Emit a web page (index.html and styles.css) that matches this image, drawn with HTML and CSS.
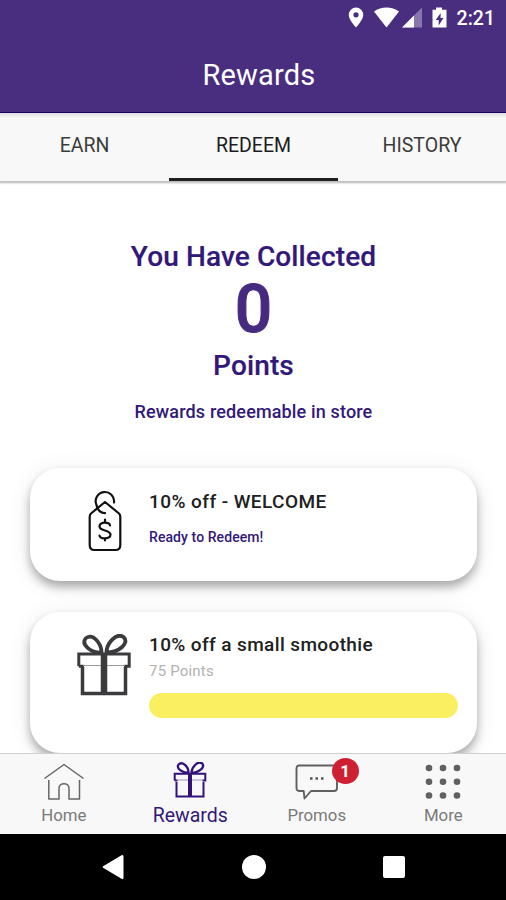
FILE: index.html
```html
<!DOCTYPE html>
<html lang="en">
<head>
<meta charset="utf-8">
<title>Rewards</title>
<link rel="stylesheet" href="styles.css">
</head>
<body>
<div class="app">
  <header class="header">
    <div class="status">
      <svg class="status-icons" width="102" height="22" viewBox="0 0 102 22" fill="#fff">
        <path fill-rule="evenodd" d="M8 0.5a7.3 7.3 0 0 1 7.3 7.3C15.300 13 8 20.500 8 20.500S.7 13 .7 7.800A7.300 7.300 0 0 1 8 .5zM8 5.200a2.600 2.600 0 1 0 0 5.200 2.600 2.600 0 0 0 0-5.200z"/>
        <path d="M26 4.500C33 -.8 44 -.8 51 4.500L38.500 20.500z"/>
        <path d="M74 .5V20.500H54z" opacity=".35"/>
        <path d="M66 8.500V20.500H54z"/>
        <path fill-rule="evenodd" d="M88 .5h6v2.200h4.500V20.500H84.500V2.700H88zM92.700 6l-5 7h3v5.500l4.800-7.500h-3z"/>
      </svg>
      <span class="clock">2:21</span>
    </div>
    <h1 class="title">Rewards</h1>
  </header>
  <nav class="tabs">
    <a class="tab tab-earn">EARN</a>
    <a class="tab tab-active">REDEEM</a>
    <a class="tab tab-history">HISTORY</a>
  </nav>
  <main class="content">
    <section class="summary">
      <p class="collected">You Have Collected</p>
      <p class="count">0</p>
      <p class="unit">Points</p>
      <p class="note">Rewards redeemable in store</p>
    </section>
    <article class="card card-ready">
      <svg class="card-icon tag-icon" width="34" height="62" viewBox="0 0 34 62" fill="none" stroke="#111" stroke-width="2.200" stroke-linecap="round" stroke-linejoin="round">
        <path d="M17 11 L31 22.500 Q32.300 23.700 32.300 26 V54 Q32.300 59 27.500 59 H6.500 Q1.700 59 1.700 54 V26 Q1.700 23.700 3 22.500 Z"/>
        <path d="M26 11.500A9.200 9.200 0 1 0 8.500 14C9.500 19 13 21.800 17 22.200"/>
        <path d="M22 34.500C22 30.500 11.500 30.500 11.500 35.500C11.500 40.500 22.500 38.500 22.500 43.500C22.500 48.500 11.500 48.500 11.500 44.500M17 28.500V31.500M17 47.500V49.500"/>
      </svg>
      <div class="card-body">
        <h2 class="card-title title-welcome">10% off - WELCOME</h2>
        <p class="ready">Ready to Redeem!</p>
      </div>
    </article>
    <article class="card card-smoothie">
      <svg class="card-icon gift-icon" width="54" height="62" viewBox="0 0 54 62" fill="none" stroke="#3b3b3d">
        <path stroke-width="3.500" d="M5.500 33V59.500H48.500V33"/>
        <path stroke-width="3" d="M1.800 32.200V20H52.200V32.200H47M1.800 32.200H7"/>
        <path stroke-width="1" stroke="#999" d="M6 31.500H48"/>
        <path stroke-width="6.500" d="M27 19V60"/>
        <path stroke-width="3.800" d="M24.500 18.500C14 19 4 11 8.500 4.500C15-2 24.500 9 24.500 18.500zM29.500 18.500C29.500 10 39-2 46.500 3C53 9 42 18.500 29.500 18.500z"/>
      </svg>
      <div class="card-body">
        <h2 class="card-title title-smoothie">10% off a small smoothie</h2>
        <p class="cost">75 Points</p>
        <div class="progress"></div>
      </div>
    </article>
  </main>
  <nav class="bottom-nav">
    <a class="nav-item">
      <svg class="nav-icon" width="42" height="40" viewBox="0 0 42 40" fill="none" stroke="#666" stroke-width="1.500" stroke-linejoin="round">
        <path d="M1.500 16.500L21 2.500L40.500 16.500M5.800 18V37H16V26.500C16 20 26 20 26 26.500V37H36.500V18"/>
      </svg>
      <span class="nav-label label-home">Home</span>
    </a>
    <a class="nav-item nav-active">
      <svg class="nav-icon" width="34" height="40" viewBox="0 0 34 40" fill="none" stroke="#32127a">
        <path stroke-width="2" d="M3.500 20V34.500H30.500V20"/>
        <path stroke-width="2" d="M1.700 18.500V11.700H32.300V18.500H29.500M1.700 18.500H4.500"/>
        <path stroke-width=".8" stroke="#8d80ab" d="M4 18H30"/>
        <path stroke-width="4" d="M17 11V35"/>
        <path stroke-width="2.300" d="M15.500 10.800C9 11 3 6.500 5.500 2.500C9.500-1 15.500 4.500 15.500 10.800zM18.500 10.800C18.500 5.500 24.500-1.500 29 1.300C33 5 26 10.800 18.500 10.800z"/>
      </svg>
      <span class="nav-label label-rewards">Rewards</span>
    </a>
    <a class="nav-item">
      <span class="promo-icon">
        <svg class="nav-icon" width="44" height="40" viewBox="0 0 44 40" fill="none" stroke="#606060" stroke-width="1.900" stroke-linejoin="round">
          <path d="M4 3.500H39Q42 3.500 42 6.500V26Q42 29 39 29H16L9.500 36.500L8.700 29H4Q1.500 29 1.500 26V6.500Q1.500 3.500 4 3.500z"/>
          <path stroke="none" fill="#555" d="M15 15.200h2.500v2.500h-2.500zM20.500 15.200h2.500v2.500h-2.500zM26 15.200h2.500v2.500h-2.500z"/>
        </svg>
        <span class="badge">1</span>
      </span>
      <span class="nav-label label-promos">Promos</span>
    </a>
    <a class="nav-item">
      <svg class="nav-icon" width="36" height="40" viewBox="0 0 36 40" fill="#606060">
        <circle cx="4" cy="6" r="3.300"/><circle cx="18" cy="6" r="3.300"/><circle cx="32" cy="6" r="3.300"/>
        <circle cx="4" cy="19.700" r="3.300"/><circle cx="18" cy="19.700" r="3.300"/><circle cx="32" cy="19.700" r="3.300"/>
        <circle cx="4" cy="33.500" r="3.300"/><circle cx="18" cy="33.500" r="3.300"/><circle cx="32" cy="33.500" r="3.300"/>
      </svg>
      <span class="nav-label label-more">More</span>
    </a>
  </nav>
  <footer class="system-bar">
    <svg width="22" height="26" viewBox="0 0 22 26" fill="#fff"><path d="M19.500 1.300Q21.500.3 21.500 2.500V23.500Q21.500 25.700 19.500 24.700L1.500 14Q-.3 13 1.500 12z"/></svg>
    <span class="sys-home"></span>
    <span class="sys-recent"></span>
  </footer>
</div>
</body>
</html>
```
FILE: styles.css
```css
* { box-sizing: border-box; margin: 0; padding: 0; }
body { width: 506px; height: 900px; overflow: hidden; background: #fff; font-family: Roboto, "Liberation Sans", sans-serif; }
.app { height: 900px; display: flex; flex-direction: column; }
.header { height: 113px; flex: none; background: #492e7f; border-bottom: 1px solid #200068; color: #fff; }
.status { height: 36px; display: flex; justify-content: flex-end; align-items: center; padding-right: 11px; gap: 7px; }
.status-icons { margin-top: -1px; }
.clock { font-size: 19.500px; font-weight: 500; line-height: 37px; }
.title { text-align: center; padding-left: 12px; font-size: 29px; font-weight: 400; line-height: 78px; letter-spacing: .2px; }
.tabs { height: 68px; flex: none; display: grid; grid-template-columns: 169px 169px 168px; grid-template-rows: 68px; background: linear-gradient(#dedde3, #f8f8f8 5px); box-shadow: 0 1px 2px 1px rgba(0,0,0,.28); position: relative; }
.tab { text-align: center; line-height: 66px; font-size: 19.500px; color: #3c3c3c; }
.tab-active { color: #1c1c1c; border-bottom: 3px solid #202022; }
.content { flex: 1; min-height: 0; overflow: hidden; padding: 60px 29px 0 30px; background: #fff; }
.summary { height: 227px; text-align: center; color: #32187a; }
.collected { font-size: 28px; font-weight: 500; line-height: 32px; letter-spacing: .12px; -webkit-text-stroke: .2px currentColor; }
.count { font-size: 66px; font-weight: 500; line-height: 74px; color: #462a80; -webkit-text-stroke: 1px currentColor; }
.unit { font-size: 28px; font-weight: 500; line-height: 38px; letter-spacing: .12px; -webkit-text-stroke: .2px currentColor; }
.note { font-size: 18px; font-weight: 500; line-height: 24px; margin-top: 15px; letter-spacing: .15px; }
.card { display: flex; border-radius: 30px; background: #fff; box-shadow: 0 6px 10px rgba(0,0,0,.3), 0 3px 24px rgba(0,0,0,.08); }
.card-ready { height: 113px; }
.card-smoothie { height: 141px; margin-top: 31px; }
.card-icon { flex: none; }
.tag-icon { margin: 23px 27px 0 58px; overflow: visible; }
.gift-icon { margin: 22px 18px 0 47px; }
.card-body { flex: 1; padding-top: 21px; padding-right: 19px; }
.card-title { font-size: 19px; font-weight: 500; line-height: 25px; color: #202020; letter-spacing: .38px; }
.title-welcome { letter-spacing: .43px; }
.title-smoothie { line-height: 24px; }
.ready { font-size: 14px; font-weight: 500; line-height: 20px; margin-top: 13px; color: #32187a; letter-spacing: .08px; }
.cost { font-size: 15px; line-height: 20px; margin-top: 4px; color: #b2b2b2; letter-spacing: .2px; }
.progress { height: 25px; border-radius: 13px; background: #faef60; margin-top: 12px; }
.bottom-nav { height: 81px; flex: none; display: grid; grid-template-columns: repeat(4, 1fr); background: #f8f8f8; border-top: 1px solid #cfcfcf; position: relative; }
.nav-item { display: flex; flex-direction: column; align-items: center; padding: 8px 0 0 1px; color: #7a7a7a; }
.nav-icon { display: block; flex: none; }
.nav-label { font-size: 16.800px; line-height: 26px; }
.nav-active { color: #32187a; }
.label-rewards { font-size: 19.500px; margin-top: 1px; }
.promo-icon { position: relative; }
.badge { position: absolute; left: 37px; top: -4px; width: 27px; height: 26px; border-radius: 50%; background: #cf1f32; color: #fff; font-size: 17px; font-weight: 700; line-height: 26px; text-align: center; }
.system-bar { height: 66px; flex: none; background: #000; display: flex; align-items: center; padding-left: 102px; }
.sys-home { width: 24px; height: 24px; border-radius: 50%; background: #fff; margin-left: 118px; }
.sys-recent { width: 22px; height: 22px; border-radius: 2px; background: #fff; margin-left: 117px; }
```
